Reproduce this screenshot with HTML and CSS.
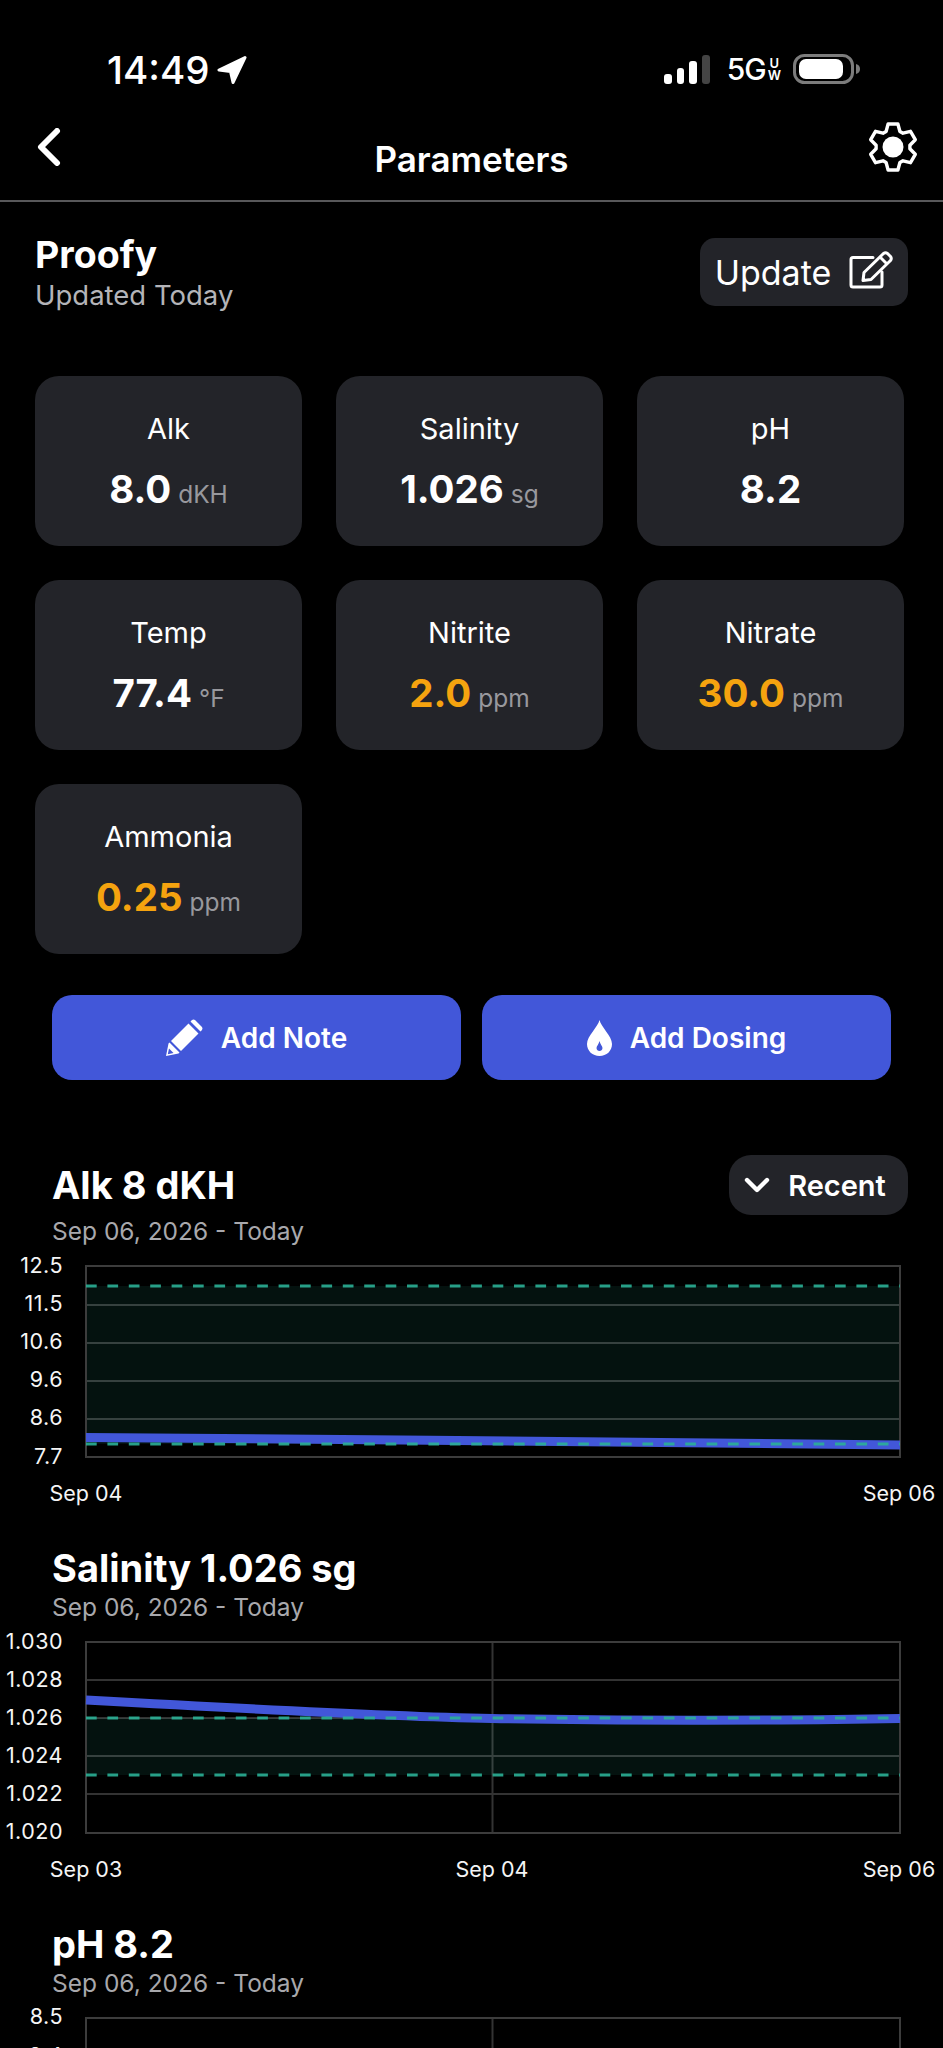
FILE: index.html
```html
<!DOCTYPE html>
<html lang="en">
<head>
<meta charset="utf-8">
<title>Parameters</title>
<link rel="stylesheet" href="styles.css">
</head>
<body>
<div class="app">
  <header class="status">
    <div class="status-left">
      <span class="time">14:49</span>
      <svg class="loc" viewBox="0 0 30 30"><path d="M28 2.5 L2 15 L13.5 16.5 L16 27.5 Z" fill="#fff" stroke="#fff" stroke-width="3" stroke-linejoin="round"/></svg>
    </div>
    <div class="status-right">
      <div class="signal"><i class="b1"></i><i class="b2"></i><i class="b3"></i><i class="b4"></i></div>
      <div class="net"><span class="fiveg">5G</span><span class="uw"><b>U</b><b>W</b></span></div>
      <svg class="batt" viewBox="0 0 67 30"><rect x="1.5" y="1.5" width="58" height="27" rx="10" fill="none" stroke="#7c7c7c" stroke-width="3"/><rect x="6" y="5" width="44" height="20" rx="7" fill="#fff"/><path d="M63 10 q4 1 4 5 q0 4 -4 5 Z" fill="#7c7c7c"/></svg>
    </div>
  </header>

  <nav class="nav">
    <svg class="back" viewBox="0 0 24 38"><path d="M20 3 L4 19 L20 35" fill="none" stroke="#fff" stroke-width="6" stroke-linecap="round" stroke-linejoin="round"/></svg>
    <h1 class="nav-title">Parameters</h1>
    <svg class="gear" viewBox="-25 -25 50 50"><path d="M-6.9 -15.5 L-4.9 -23 L4.9 -23 L6.9 -15.5 L10 -13.8 L17.5 -15.7 L22.3 -7.3 L16.9 -1.8 L16.9 1.8 L22.3 7.3 L17.5 15.7 L10 13.8 L6.9 15.5 L4.9 23 L-4.9 23 L-6.9 15.5 L-10 13.8 L-17.5 15.7 L-22.3 7.3 L-16.9 1.8 L-16.9 -1.8 L-22.3 -7.3 L-17.5 -15.7 L-10 -13.8 Z" fill="none" stroke="#fff" stroke-width="3.4" stroke-linejoin="round"/><circle r="10.5" fill="#fff"/></svg>
  </nav>

  <section class="tank">
    <div>
      <div class="tank-name">Proofy</div>
      <div class="tank-sub">Updated Today</div>
    </div>
    <button class="update">Update
      <svg class="edit" viewBox="0 0 44 38"><path d="M24 6.5 H4 Q2 6.5 2 8.5 V34 Q2 36 4 36 H31 Q33 36 33 34 V21" fill="none" stroke="#fff" stroke-width="3" stroke-linecap="round"/><path d="M14 29.5 L15 21.5 L34.5 2.5 Q36.5 1 38.5 2.5 L41.5 5.5 Q43 7.5 41.5 9.5 L22 28.5 Z M31 6 L38 13" fill="none" stroke="#fff" stroke-width="3" stroke-linejoin="round"/></svg>
    </button>
  </section>

  <section class="cards">
    <div class="card"><div class="card-label">Alk</div><div class="card-value"><strong>8.0</strong><span>dKH</span></div></div>
    <div class="card"><div class="card-label">Salinity</div><div class="card-value"><strong>1.026</strong><span>sg</span></div></div>
    <div class="card"><div class="card-label">pH</div><div class="card-value"><strong>8.2</strong></div></div>
    <div class="card"><div class="card-label">Temp</div><div class="card-value"><strong>77.4</strong><span>°F</span></div></div>
    <div class="card"><div class="card-label">Nitrite</div><div class="card-value warn"><strong>2.0</strong><span>ppm</span></div></div>
    <div class="card"><div class="card-label">Nitrate</div><div class="card-value warn"><strong>30.0</strong><span>ppm</span></div></div>
    <div class="card"><div class="card-label">Ammonia</div><div class="card-value warn"><strong>0.25</strong><span>ppm</span></div></div>
  </section>

  <section class="actions">
    <button class="action">
      <svg class="ic-pencil" viewBox="0 0 37 37"><path d="M0 37 L2.5 24.5 L3.5 23.5 L13.5 33.5 L12.5 34.5 Z M5 22 L22.5 4.5 L32.5 14.5 L15 32 Z M24.5 2.5 L26 1 Q27.5 0 29 1 L36 8 Q37 9.5 36 11 L34.5 12.5 Z" fill="#fff"/><path d="M1.8 35.2 L3 29.5 L7.5 34 Z" fill="#4257d9"/></svg>
      Add Note
    </button>
    <button class="action">
      <svg class="ic-drop" viewBox="0 0 25 36"><path d="M12.5 0 C14 7 25 16 25 24 C25 31 19.5 36 12.5 36 C5.5 36 0 31 0 24 C0 16 11 7 12.5 0 Z" fill="#fff"/><path d="M12.5 21 C13 24 15.5 26 15.5 28 C15.5 30 14 31 12.5 31 C11 31 9.5 30 9.5 28 C9.5 26 12 24 12.5 21 Z" fill="#4257d9"/></svg>
      Add Dosing
    </button>
  </section>

  <section class="chart-sec first">
    <div class="chart-head">
      <h2 class="chart-title">Alk 8 dKH</h2>
      <button class="range">
        <svg class="chev" viewBox="0 0 26 16"><path d="M3 3 L13 13 L23 3" fill="none" stroke="#fff" stroke-width="4.4" stroke-linecap="round" stroke-linejoin="round"/></svg>
        Recent
      </button>
    </div>
    <div class="chart-date">Sep 06, 2026 - Today</div>
    <svg class="chart" viewBox="0 1250 943 260">
      <rect class="band" x="86" y="1286" width="814" height="158"/>
      <path class="grid" d="M86 1305 H900 M86 1343 H900 M86 1381 H900 M86 1419 H900"/>
      <rect class="frame" x="86" y="1266" width="814" height="191"/>
      <path class="series" d="M86 1437.5 C 350 1440 650 1441 900 1445"/>
      <path class="limit" d="M86 1286 H900 M86 1444 H900"/>
      <text class="axis end" x="63" y="1273">12.5</text>
      <text class="axis end" x="63" y="1311">11.5</text>
      <text class="axis end" x="63" y="1349">10.6</text>
      <text class="axis end" x="63" y="1387">9.6</text>
      <text class="axis end" x="63" y="1425">8.6</text>
      <text class="axis end" x="63" y="1464">7.7</text>
      <text class="axis mid" x="86" y="1501">Sep 04</text>
      <text class="axis mid" x="899" y="1501">Sep 06</text>
    </svg>
  </section>

  <section class="chart-sec">
    <h2 class="chart-title">Salinity 1.026 sg</h2>
    <div class="chart-date">Sep 06, 2026 - Today</div>
    <svg class="chart" viewBox="0 1627 943 260">
      <rect class="band" x="86" y="1719" width="814" height="57"/>
      <path class="grid" d="M86 1681 H900 M86 1719 H900 M86 1757 H900 M86 1795 H900 M492.5 1643 V1834"/>
      <rect class="frame" x="86" y="1643" width="814" height="191"/>
      <path class="series" d="M86 1701 C 230 1709 380 1717 492 1719.5 C 600 1721.5 780 1722 900 1719.5"/>
      <path class="limit" d="M86 1719 H900 M86 1776 H900"/>
      <text class="axis end" x="63" y="1650">1.030</text>
      <text class="axis end" x="63" y="1688">1.028</text>
      <text class="axis end" x="63" y="1726">1.026</text>
      <text class="axis end" x="63" y="1764">1.024</text>
      <text class="axis end" x="63" y="1802">1.022</text>
      <text class="axis end" x="63" y="1840">1.020</text>
      <text class="axis mid" x="86" y="1878">Sep 03</text>
      <text class="axis mid" x="492" y="1878">Sep 04</text>
      <text class="axis mid" x="899" y="1878">Sep 06</text>
    </svg>
  </section>

  <section class="chart-sec">
    <h2 class="chart-title">pH 8.2</h2>
    <div class="chart-date">Sep 06, 2026 - Today</div>
    <svg class="chart" viewBox="0 2003 943 260">
      <path class="grid" d="M86 2057 H900 M86 2095 H900 M492.5 2019 V2210"/>
      <rect class="frame" x="86" y="2019" width="814" height="191"/>
      <text class="axis end" x="63" y="2025">8.5</text>
      <text class="axis end" x="63" y="2064">8.4</text>
    </svg>
  </section>
</div>
</body>
</html>
```

FILE: styles.css
```css
* { box-sizing: border-box; }
html, body { margin: 0; padding: 0; background: #000; }
body { font-family: Inter, "Liberation Sans", sans-serif; color: #fff; }
.app { width: 943px; height: 2048px; overflow: hidden; background: #000; }
button { font-family: inherit; color: #fff; border: 0; }

.status { height: 86px; padding: 54px 83px 0 107px; display: flex; justify-content: space-between; align-items: flex-start; }
.status-left { display: flex; align-items: center; gap: 8px; height: 32px; }
.time { font-size: 38.5px; font-weight: 500; line-height: 32px; }
.loc { width: 30px; height: 30px; display: block; }
.status-right { display: flex; align-items: flex-start; height: 32px; }
.signal { display: flex; align-items: flex-end; gap: 5px; height: 30px; width: 46px; }
.signal i { display: block; width: 8px; border-radius: 3px; background: #fff; }
.signal .b1 { height: 10px; }
.signal .b2 { height: 16px; }
.signal .b3 { height: 23px; }
.signal .b4 { height: 29px; background: #444; }
.net { display: flex; align-items: center; margin-left: 17px; height: 30px; }
.fiveg { font-size: 30px; font-weight: 500; line-height: 30px; letter-spacing: -1px; }
.uw { display: flex; flex-direction: column; align-items: center; margin-left: 2px; }
.uw b { font-size: 13px; line-height: 12px; font-weight: 600; }
.batt { width: 67px; height: 30px; display: block; margin-left: 12px; }

.nav { height: 116px; border-bottom: 2px solid #58585a; padding: 0 25px; display: grid; grid-template-columns: 1fr auto 1fr; align-items: start; }
.back { width: 24px; height: 38px; display: block; margin: 42px 0 0 12px; }
.nav-title { margin: 53px 0 0; font-size: 35px; line-height: 40px; font-weight: 600; text-align: center; }
.gear { width: 50px; height: 50px; display: block; margin-top: 36px; justify-self: end; }

.tank { display: flex; justify-content: space-between; align-items: flex-start; padding: 36px 35px 0 35px; height: 174px; }
.tank-name { font-size: 37.5px; line-height: 44px; font-weight: 700; margin-top: -5px; }
.tank-sub { font-size: 27.5px; line-height: 36px; color: #b4b4b8; margin-top: 0; }
.update { width: 208px; height: 68px; border-radius: 15px; background: #232429; font-size: 34px; font-weight: 400; display: flex; align-items: center; justify-content: center; gap: 18px; padding: 0; }
.edit { width: 44px; height: 38px; display: block; margin-top: -4px; }

.cards { display: grid; grid-template-columns: repeat(3, 267px); grid-auto-rows: 170px; gap: 34px; padding-left: 35px; }
.card { background: #232429; border-radius: 24px; display: flex; flex-direction: column; align-items: center; padding-top: 35px; }
.card-label { font-size: 29px; line-height: 36px; }
.card-value { display: flex; align-items: baseline; gap: 7px; margin-top: 18px; line-height: 48px; }
.card-value strong { font-size: 38.5px; font-weight: 700; }
.card-value span { font-size: 24.5px; color: #98989d; }
.warn strong { color: #f5a30f; }

.actions { display: flex; gap: 21px; padding: 41px 0 0 52px; }
.action { width: 409px; height: 85px; border-radius: 20px; background: #4257d9; font-size: 28px; font-weight: 600; display: flex; align-items: center; justify-content: center; gap: 18px; padding: 0; }
.ic-pencil { width: 37px; height: 37px; display: block; }
.ic-drop { width: 25px; height: 36px; display: block; }

.chart-sec { margin-top: 36px; }
.chart-sec.first { margin-top: 75px; }
.chart-head { height: 60px; display: flex; justify-content: space-between; align-items: center; padding-right: 35px; }
.chart-title { margin: 0; padding-left: 52px; font-size: 38px; line-height: 45px; font-weight: 700; }
.range { width: 179px; height: 60px; border-radius: 22px; background: #232429; font-size: 29px; font-weight: 600; display: flex; align-items: center; justify-content: center; gap: 18px; padding: 0 7px 0 0; }
.chev { width: 26px; height: 16px; display: block; }
.chart-date { margin-top: 1px; padding-left: 52px; font-size: 24.5px; line-height: 30px; color: #a8a8ac; }
.chart { display: block; width: 943px; height: 260px; margin-top: 4px; }
.band { fill: #04120f; }
.grid { fill: none; stroke: rgba(255, 255, 255, 0.2); stroke-width: 2; }
.frame { fill: none; stroke: #3c3c3c; stroke-width: 2; }
.series { fill: none; stroke: #4257d9; stroke-width: 9; }
.limit { fill: none; stroke: #2bb096; stroke-width: 3; stroke-dasharray: 10.7 10.7; opacity: 0.9; }
.axis { fill: #f5f5f5; font-size: 21.5px; }
.end { text-anchor: end; letter-spacing: 0.5px; }
.mid { text-anchor: middle; }
```
